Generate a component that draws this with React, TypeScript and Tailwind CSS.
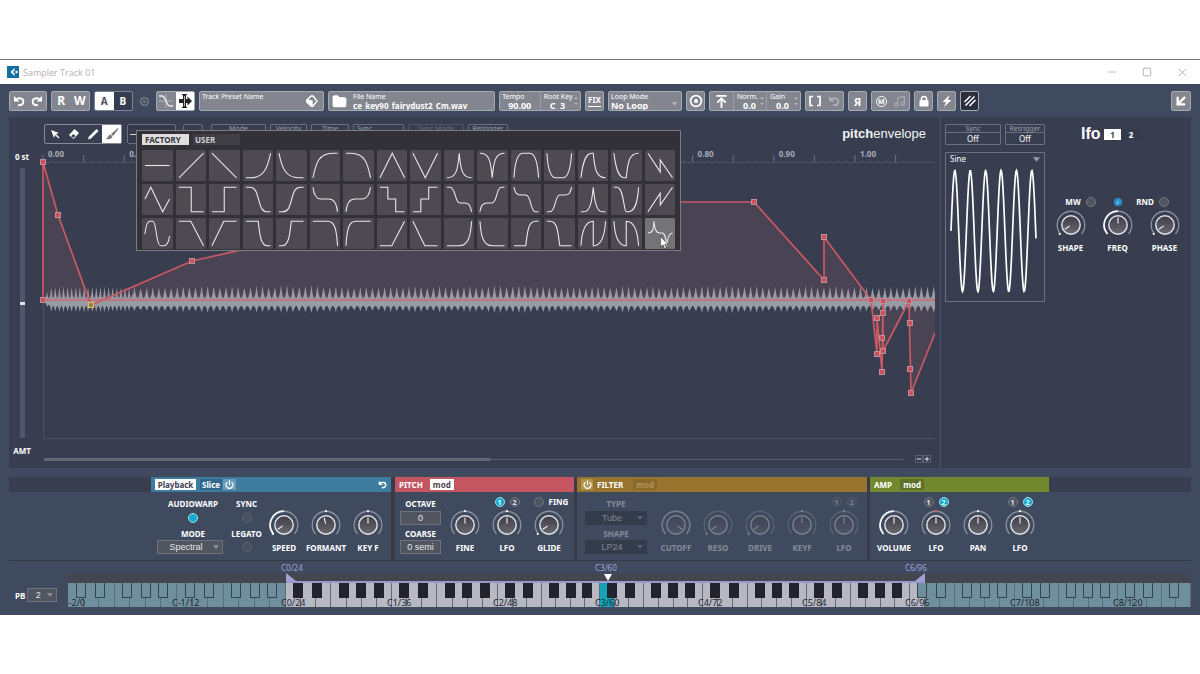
import { ReactNode } from 'react';
import { twMerge } from 'tailwind-merge';
import {
  ArrowDownLeft,
  ArrowUpToLine,
  FolderClosed,
  Minus,
  Music,
  Plus,
  Power,
  Square,
  X,
} from 'lucide-react';

const CURVES = [
  'M0 12.5H25',
  'M0 25L25 0',
  'M0 0L25 25',
  'M0 25H5C18 25 22 15 25 0',
  'M0 0C3 15 7 25 20 25H25',
  'M0 25C3 10 6 0 20 0H25',
  'M0 0H5C19 0 22 10 25 25',
  'M0 25L12.5 0L25 25',
  'M0 0L12.5 25L25 0',
  'M0 25C9 25 11 18 12.5 0C14 18 16 25 25 25',
  'M0 0C9 0 11 7 12.5 25C14 7 16 0 25 0',
  'M0 25C1 8 4 0 9 0H16C21 0 24 8 25 25',
  'M0 0C1 17 4 25 9 25H16C21 25 24 17 25 0',
  'M0 25C2 8 5 0 11 0H12.5C14 17 16 25 25 25',
  'M0 0C2 17 5 25 11 25H12.5C14 8 16 0 25 0',
  'M0 0L12.5 19V7L25 25',
  'M0 12L6 0L18 25L25 12',
  'M0 0H12.5V25H25',
  'M0 25H12.5V0H25',
  'M0 0H4C10 0 11 6 13 13C15 20 16 25 22 25H25',
  'M0 25H4C10 25 11 19 13 12C15 5 16 0 22 0H25',
  'M0 0C1 8 3 12 8 12H16C21 12 24 16 25 25',
  'M0 25C1 16 4 12 9 12H16C21 12 24 8 25 0',
  'M0 0H8V12H16V25H25',
  'M0 25H8V12H16V0H25',
  'M0 0H3C9 0 8 16 13 16H18C23 16 24 20 25 25',
  'M0 25C1 18 3 16 8 16H12C18 16 16 0 22 0H25',
  'M0 0C1 6 3 8 8 8H12C18 8 16 25 22 25H25',
  'M0 25H3C9 25 8 8 13 8H18C23 8 24 5 25 0',
  'M0 25H3C9 25 11 16 12.5 0C14 16 16 25 22 25H25',
  'M0 0H3C10 0 10 25 12.5 25H14C21 25 24 17 25 0',
  'M0 25L12.5 6V18L25 0',
  'M0 13C1 4 3 0 5 0H8C12 0 11 25 16 25H19C22 25 24 22 25 15',
  'M0 0H12L25 25',
  'M0 25L12 0H25',
  'M0 0H12.5C14 14 15 25 22 25H25',
  'M0 25H3C10 25 11 14 12.5 0H25',
  'M0 0H15C22 0 24 8 25 25',
  'M0 25C1 8 3 0 10 0H25',
  'M0 25H12L25 0',
  'M0 0L12 25H25',
  'M0 25H12C22 25 24 15 25 0',
  'M0 0C1 15 3 25 13 25H25',
  'M0 25H12C14 8 15 0 22 0H25',
  'M0 0H3C10 0 11 8 13 25H25',
  'M0 25C1 8 5 0 12.5 0V25C20 25 24 17 25 0',
  'M0 0C1 17 5 25 12.5 25V0C20 0 24 8 25 25',
  'M0 12C5 12 6 8 6 0C7 8 8 12 12 12H15C17 13 18 15 19 25C20 15 22 12 25 12',
];

const ENVELOPE = 'M0 154V16L15 69L48 159L149 115L297 82L500 56H711L781 134V91L828 154L834 208V172L839 226L840 155V205L866 155L868 247L892 187';
const NODES = [
  [0, 16], [0, 154], [15, 69], [149, 115], [711, 56], [781, 134], [781, 91], [828, 154], [834, 172],
  [834, 208], [840, 155], [840, 167], [839, 192], [840, 205], [839, 226], [866, 155], [867, 177], [867, 223], [868, 247],
];

// width weight and label of every octave; the last one stops at G8
const OCTAVES = [
  { label: 'C-2/0', weight: 109 },
  { label: 'C-1/12', weight: 109 },
  { label: 'C0/24', weight: 106 },
  { label: 'C1/36', weight: 106 },
  { label: 'C2/48', weight: 102 },
  { label: 'C3/60', weight: 103 },
  { label: 'C4/72', weight: 104 },
  { label: 'C5/84', weight: 103 },
  { label: 'C6/96', weight: 105 },
  { label: 'C7/108', weight: 103 },
  { label: 'C8/120', weight: 73 },
];
const BLACK_KEYS = [0.82, 2.06, 3.82, 4.98, 6.13];

// one half of the wave form: side is -1 above the zero line and 1 below it
function wavePath(side: number) {
  let d = 'M0 154';
  for (let x = 0; x <= 892; x += 0.5) {
    const period = x < 90 ? 4.1 : 6.1;
    const spike = Math.pow(Math.abs(1 - (2 * (x % period)) / period), 2);
    const size = (side < 0 ? 12 : 6) + Math.sin(x / 61) * Math.sin(x / 23) + Math.sin(x * 2.3);
    const base = side < 0 ? 2 : 6;
    const fade = Math.min(1, (x + 2) / 10);
    d += `L${x} ${(154 + side * fade * (base + spike * size)).toFixed(1)}`;
  }
  return d + 'V154Z';
}

function sinePath() {
  let d = 'M0 61';
  for (let x = 0; x <= 85; x += 0.5) {
    d += `L${x} ${(61 - 60.5 * Math.sin((x / 15.4) * Math.PI * 2)).toFixed(1)}`;
  }
  return d;
}

function Group({ children, className = '' }: { children: ReactNode; className?: string }) {
  return (
    <div className={twMerge('flex h-5 items-center justify-around overflow-hidden rounded-[2px] border border-[#a5a9b1] bg-[#83868f] text-white', className)}>
      {children}
    </div>
  );
}

function IconButton({ label, children, className = '' }: { label: string; children: ReactNode; className?: string }) {
  return (
    <button aria-label={label} className={`flex h-full flex-1 items-center justify-center ${className}`}>
      {children}
    </button>
  );
}

function UndoArrow({ className = '' }: { className?: string }) {
  return (
    <svg viewBox="0 0 12 12" className={`h-3 w-3 ${className}`} fill="none" stroke="currentColor" strokeWidth="1.9">
      <path d="M3 4.500C5 2.500 10.300 2.700 10.300 6.400C10.300 8.600 8.500 10.300 5 10.300" />
      <path d="M1 1V6.500H6.500Z" fill="currentColor" stroke="none" />
    </svg>
  );
}

function Field({ label, value, className = '' }: { label: string; value: string; className?: string }) {
  return (
    <label className={`flex min-w-0 flex-col text-[7px] leading-[8px] ${className}`}>
      {label}
      <input defaultValue={value} className="h-[9px] w-full bg-transparent text-[9px] leading-[9px] font-bold text-inherit outline-none" />
    </label>
  );
}

function Stepper() {
  return (
    <svg viewBox="0 0 4 10" className="h-[10px] w-1 shrink-0 fill-[#b9bcc3]">
      <path d="M0 3L2 1L4 3ZM0 7L2 9L4 7Z" />
    </svg>
  );
}

function Knob({ label, angle = 0, bright, dot, top, wide }: { label: string; angle?: number; bright?: 'half' | 'full'; dot?: string; top?: ReactNode; wide?: boolean }) {
  return (
    <div className={`flex flex-col items-center ${wide ? 'w-[47px]' : 'w-[42px]'}`}>
      <div className="flex h-3 items-center justify-center gap-[5px] whitespace-nowrap">{top}</div>
      <svg viewBox="-15 -15 30 30" role="img" aria-label={label} className="mt-[2px] h-[30px] w-[30px]">
        <defs>
          <linearGradient id="cap" x1="0" y1="0" x2="0" y2="1">
            <stop offset="0" stopColor="#3f3d45" />
            <stop offset="1" stopColor="#6a6870" />
          </linearGradient>
        </defs>
        <path d="M-10.5 9A13.8 13.8 0 1 1 10.5 9" fill="none" stroke="#8b919d" strokeWidth="1.3" />
        {bright === 'half' && <path d="M-10.5 9A13.8 13.8 0 0 1 0 -13.8" fill="none" stroke="#f4f5f7" strokeWidth="1.7" />}
        {bright === 'full' && <path d="M-10.5 9A13.8 13.8 0 1 1 10.5 9" fill="none" stroke="#d5d8de" strokeWidth="1.5" />}
        <circle r="9.2" fill="url(#cap)" stroke="#e4e5e9" strokeWidth="1.4" />
        <path d="M0 -7.5V-1.5" stroke="#f4f5f7" strokeWidth="1.1" transform={`rotate(${angle})`} />
        {dot && <circle cy="-13.8" r="1.1" fill={dot} />}
        {angle < -90 && <circle cx="-11.3" cy="9" r="1.1" fill="#fff" />}
      </svg>
      <span className="mt-[3px] text-[8px] leading-[10px] font-bold">{label}</span>
    </div>
  );
}

function Lamp({ on, label, text }: { on?: boolean; label: string; text?: string }) {
  return (
    <button
      aria-label={label}
      className={`flex h-[10px] w-[10px] shrink-0 items-center justify-center rounded-full border text-[7px] leading-none font-bold ${
        on ? 'border-[#a9e0ee] bg-[#12a9cc] text-white' : 'border-[#73777f] bg-[#50545f] text-gray-200'
      }`}
    >
      {text}
    </button>
  );
}

function LfoLamps({ on }: { on?: number }) {
  return (
    <>
      <Lamp label="LFO 1" text="1" on={on === 1} />
      <Lamp label="LFO 2" text="2" on={on === 2} />
    </>
  );
}

function Picker({ label, value, className = '' }: { label: string; value: string; className?: string }) {
  return (
    <div className={`relative ${className}`}>
      <select aria-label={label} className="block h-[14px] w-full appearance-none border border-[#6c717d] bg-[#505560] pr-2 font-['Liberation_Sans',sans-serif] text-[9px] leading-[12px] font-normal text-gray-200 [text-align-last:center]">
        <option>{value}</option>
      </select>
      <svg viewBox="0 0 6 4" className="pointer-events-none absolute top-[5px] right-1 h-1 w-[6px] fill-[#8b8f99]">
        <path d="M0 0H6L3 4Z" />
      </svg>
    </div>
  );
}

function Param({ label, value, className = '' }: { label: string; value?: string; className?: string }) {
  return (
    <div className={`flex h-[21px] shrink-0 flex-col rounded-[1px] border border-[#6a7080] text-center text-[8px] ${className}`}>
      <span className="h-2 border-b border-[#6a7080] text-[7px] leading-[8px] text-[#9a9fac]">{label}</span>
      <button aria-label={label} className="flex-1 leading-[11px] text-white">{value}</button>
    </div>
  );
}

function Toolbar() {
  return (
    <div className="flex items-center gap-1 px-[9px] pt-[7px] pb-[6px]">
      <Group className="w-[38px]">
        <IconButton label="Undo"><UndoArrow /></IconButton>
        <IconButton label="Redo"><UndoArrow className="-scale-x-100" /></IconButton>
      </Group>
      <Group className="w-[39px] text-[12px] leading-none font-bold">
        <IconButton label="Read">R</IconButton>
        <IconButton label="Write">W</IconButton>
      </Group>
      <Group className="w-[39px] border-[#7d8493] bg-[#353c50] text-[10px] font-bold">
        <IconButton label="Setting A" className="bg-white text-[#4b4f5b]">A</IconButton>
        <IconButton label="Setting B">B</IconButton>
      </Group>
      <div className="flex w-[15px] justify-center">
        <span className="flex h-[9px] w-[9px] items-center justify-center rounded-full border border-[#8d94a2] bg-[#4a4f5c]">
          <span className="h-[3px] w-[3px] rounded-full bg-[#6d7380]" />
        </span>
      </div>
      <Group className="w-[39px]">
        <IconButton label="Crossfade">
          <svg viewBox="0 0 18 18" className="h-[18px] w-[18px]" fill="none">
            <path d="M2 9H16M9 2V16" stroke="#b3b6bd" />
            <path d="M2 4H5C9 4 9 14 13 14H16" stroke="#f0f0f0" strokeWidth="1.3" />
          </svg>
        </IconButton>
        <IconButton label="Snap" className="bg-white">
          <svg viewBox="0 0 18 18" className="h-[18px] w-[18px] fill-[#222]">
            <path d="M3 7H7V3.500L5.500 2H11.500L10 3.500V7H11.500V4.500L16 9L11.500 13.500V11H10V14.500L11.500 16H5.500L7 14.500V11H3Z" />
            <path d="M8.500 4V14" stroke="#fff" strokeWidth=".7" />
          </svg>
        </IconButton>
      </Group>
      <Group className="w-[125px] justify-between pr-1 pl-[2px]">
        <span className="self-start text-[7px] leading-[9px]">Track Preset Name</span>
        <button aria-label="Load preset">
          <svg viewBox="0 0 14 14" className="h-[14px] w-[14px]" fill="none" stroke="#fff" strokeWidth="1.4">
            <path d="M2 6L6 2H8L12 7L8 12H6L2 8Z" />
            <path d="M2 6L7 7V12L2 8Z" fill="#fff" />
          </svg>
        </button>
      </Group>
      <Group className="w-[167px] pl-[3px]">
        <button aria-label="Open file"><FolderClosed size={15} strokeWidth={2} fill="white" /></button>
        <Field label="File Name" value="ce_key90_fairydust2_Cm.wav" className="ml-[6px] flex-1 [&>input]:text-[8px]" />
      </Group>
      <Group className="w-[82px] px-[2px]">
        <Field label="Tempo" value="90.00" className="w-[38px] [&>input]:pl-[6px]" />
        <span className="h-full w-px bg-[#9b9ea6]" />
        <Field label="Root Key" value="C  3" className="w-8 pl-[2px] whitespace-nowrap [&>input]:pl-[6px]" />
        <Stepper />
      </Group>
      <Group className="w-[19px]">
        <IconButton label="Fix" className="text-[8px] leading-none font-bold"><span className="border-b border-white pb-[2px]">FIX</span></IconButton>
      </Group>
      <Group className="w-[74px] pr-1 pl-[2px]">
        <label className="flex flex-1 flex-col text-[7px] leading-[8px]">
          Loop Mode
          <select className="h-[9px] appearance-none bg-transparent text-[9px] leading-[9px] font-bold"><option>No Loop</option></select>
        </label>
        <svg viewBox="0 0 6 4" className="mt-[6px] h-1 w-[5px] fill-[#b9bcc3]"><path d="M0 0H6L3 4Z" /></svg>
      </Group>
      <Group className="w-[19px]">
        <IconButton label="Monitor">
          <svg viewBox="0 0 14 14" className="h-[14px] w-[14px]" fill="none" stroke="#fff" strokeWidth="1.7">
            <circle cx="7" cy="7" r="5.4" />
            <circle cx="7" cy="7" r="2" fill="#fff" stroke="none" />
          </svg>
        </IconButton>
      </Group>
      <Group className="w-[92px] pr-[2px]">
        <IconButton label="Normalize" className="border-r border-[#9b9ea6]"><ArrowUpToLine size={15} strokeWidth={3} /></IconButton>
        <Field label="Norm." value="0.0" className="w-[26px] pl-[3px] [&>input]:pl-[6px]" />
        <Stepper />
        <span className="ml-[2px] h-full w-px bg-[#9b9ea6]" />
        <Field label="Gain" value="0.0" className="w-[27px] pl-[3px] [&>input]:pl-[6px]" />
        <Stepper />
      </Group>
      <Group className="w-[39px]">
        <IconButton label="Trim">
          <svg viewBox="0 0 14 12" className="h-3 w-[14px]" fill="none" stroke="#fff" strokeWidth="1.7"><path d="M5 1.5H2V10.5H5M9 1.5H12V10.5H9" /></svg>
        </IconButton>
        <IconButton label="Revert" className="text-[#acafb6]"><UndoArrow /></IconButton>
      </Group>
      <Group className="w-[19px]">
        <IconButton label="Reverse" className="text-[11px] leading-none font-bold">Я</IconButton>
      </Group>
      <Group className="w-[39px]">
        <IconButton label="Mono">
          <span className="flex h-[11px] w-[11px] items-center justify-center rounded-full border border-white text-[7px] leading-none font-bold">M</span>
        </IconButton>
        <IconButton label="Legato" className="text-[#acafb6]"><Music size={13} strokeWidth={2} /></IconButton>
      </Group>
      <Group className="w-[19px]">
        <IconButton label="Lock">
          <svg viewBox="0 0 12 12" className="h-3 w-3">
            <rect x="1.500" y="5" width="9" height="6.500" rx="1" fill="#fff" />
            <path d="M3.500 5.500V4A2.500 2.500 0 0 1 8.500 4V5.500" fill="none" stroke="#fff" strokeWidth="1.500" />
          </svg>
        </IconButton>
      </Group>
      <Group className="w-[19px]">
        <IconButton label="Flash">
          <svg viewBox="0 0 12 12" className="h-3 w-3 fill-white"><path d="M8.500 0L1.500 7H5L3 12L10.500 5H7Z" /></svg>
        </IconButton>
      </Group>
      <Group className="w-[19px] bg-[#2b2e3c]">
        <IconButton label="MIDI">
          <svg viewBox="0 0 14 14" className="h-[14px] w-[14px]" stroke="#fff" strokeWidth="1.500"><path d="M1.500 8L7.500 2M2.500 11.500L11.500 2.500M6.500 12L12.500 6" /></svg>
        </IconButton>
      </Group>
      <Group className="ml-auto w-5">
        <IconButton label="Collapse"><ArrowDownLeft size={16} strokeWidth={3.500} /></IconButton>
      </Group>
    </div>
  );
}

function CurvePopup() {
  return (
    <div className="absolute top-[13px] left-[127px] w-[545px] border border-[#7d7c83] bg-[#333138] px-[5px] pt-[3px] pb-px">
      <div className="flex gap-1 text-[8px] leading-[11px] font-bold">
        <button className="w-[47px] bg-[#dedede] pl-[3px] text-left text-[#37353b]">FACTORY</button>
        <button className="w-[47px] bg-[#413f46] pl-[2px] text-left text-[#d0d0d3]">USER</button>
      </div>
      <div className="mt-[5px] grid grid-cols-[repeat(16,1fr)] gap-[3px]">
        {CURVES.map((d, i) => (
          <button key={i} aria-label={`Curve ${i + 1}`} className={`relative h-[31px] rounded-[1px] ${i === 47 ? 'bg-[#747376]' : 'bg-[#4d4a51]'}`}>
            <svg viewBox="-3 -3 31 31" className="h-[31px] w-full" fill="none" stroke="#e9e9ea" strokeWidth="1.1">
              <path d={d} />
            </svg>
            {i === 47 && (
              <svg viewBox="0 0 10 15" className="absolute top-[18px] left-[15px] h-[14px] w-[9px]">
                <path d="M.5 .5V12L3.300 9.500L5.200 14L7.200 13.200L5.300 8.900H9Z" fill="#fff" stroke="#222" strokeWidth=".6" />
              </svg>
            )}
          </button>
        ))}
      </div>
    </div>
  );
}

function EnvelopeGraph() {
  return (
    <svg className="block h-[294px] w-full">
      <g transform="translate(6 0)">
        <path d="M0.5 16V292.500H2000M0 16.5H2000" fill="none" stroke="#4b5264" />
        {Array.from({ length: 110 }, (_, i) => (
          <path key={i} d={`M${i * 8.12} 16V${i % 5 ? 14 : 9}`} stroke={i % 5 ? '#4b5264' : '#6b7282'} />
        ))}
        {Array.from({ length: 11 }, (_, i) => (
          <text key={i} x={5 + i * 81.2} y={11} className="fill-[#a7acb7] text-[8px] font-bold">{(i / 10).toFixed(2)}</text>
        ))}
        <path d={`${ENVELOPE}V154Z`} fill="#4a4353" />
        <path d={wavePath(-1)} fill="#9b98a1" />
        <path d={wavePath(1)} fill="#979ca4" />
        <path d="M0 154H892" stroke="#c8707c" strokeWidth="2" opacity=".85" />
        <path d={ENVELOPE} fill="none" stroke="#cb5864" strokeWidth="1.700" />
        {NODES.map(([x, y], i) => (
          <rect key={i} x={x - 2.500} y={y - 2.500} width="5" height="5" fill="#d04f5c" stroke="#bd8f97" />
        ))}
        <rect x="45.500" y="156.500" width="5" height="5" fill="#8b7e68" stroke="#f2c04e" />
      </g>
    </svg>
  );
}

function Tools() {
  return (
    <div className="flex h-[29px] items-start pt-[7px] pl-[35px]">
      <div className="flex h-5 w-[78px] shrink-0 rounded-[2px] border border-[#858b99] text-white">
        <IconButton label="Select">
          <svg viewBox="0 0 10 10" className="h-[10px] w-[10px] fill-white"><path d="M1 1L9 4L6 5L9.500 8.500L8.500 9.500L5 6L4 9Z" /></svg>
        </IconButton>
        <IconButton label="Erase">
          <svg viewBox="0 0 12 12" className="h-3 w-3"><path d="M6.500 1L11 5L5.500 11L1 7Z" fill="#fff" /><path d="M3.200 8.200L5.400 10L7.400 7.800L5.200 6Z" fill="#383f52" /></svg>
        </IconButton>
        <IconButton label="Draw">
          <svg viewBox="0 0 12 12" className="h-3 w-3 fill-white"><path d="M9.500 1L11.500 3L4 10.500L1 11.500L2 8.500Z" /></svg>
        </IconButton>
        <IconButton label="Paint curve" className="bg-white">
          <svg viewBox="0 0 14 14" className="h-[14px] w-[14px] fill-[#7a7a80]"><path d="M13 1L13.500 2L8 9L6 7ZM5.500 7.500L7.500 9.500C6.500 12.500 3.500 12.500 .5 12C3 11.500 2.500 8.500 5.500 7.500Z" /></svg>
        </IconButton>
      </div>
      <div className="ml-[5px] flex h-5 w-[49px] shrink-0 items-center rounded-[2px] border border-[#6a7080] bg-[#343a4c] px-[2px] pt-[1px]">
        <span className="h-px w-7 bg-gray-300" />
      </div>
      <div className="ml-[7px] h-5 w-5 shrink-0 rounded-[2px] border border-[#6a7080] pt-[5px]"><div className="mx-auto h-px w-3 bg-gray-200" /></div>
      <div className="ml-2 flex gap-1">
        <Param label="Mode" className="w-[55px]" />
        <Param label="Velocity" className="w-[37px]" />
        <Param label="Time" className="w-[38px]" />
        <Param label="Sync" className="w-[51px] [&>span]:pr-7" />
        <Param label="Sync Mode" className="w-14 opacity-50" />
        <Param label="Retrigger" className="w-10" />
      </div>
      <h2 className="ml-auto pr-[14px] font-['Liberation_Sans',sans-serif] text-[13px] leading-5 text-gray-100">
        <b>pitch</b>envelope
      </h2>
    </div>
  );
}

function LfoPanel() {
  return (
    <aside className="flex w-[250px] shrink-0 gap-3 bg-[#383e50] pt-[7px] pl-1">
      <div className="w-[100px]">
        <div className="flex justify-between">
          <Param label="Sync" value="Off" className="w-14" />
          <Param label="Retrigger" value="Off" className="w-10" />
        </div>
        <div className="relative mt-[7px] border border-[#6a7080] pb-[7px] pl-1">
          <select aria-label="LFO shape" className="block h-3 w-full appearance-none bg-transparent text-[8px] leading-none text-white"><option>Sine</option></select>
          <svg viewBox="0 0 8 5" className="pointer-events-none absolute top-1 right-1 h-[5px] w-[7px] fill-[#9a9fac]"><path d="M0 0H8L4 5Z" /></svg>
          <svg viewBox="-1 -2 88 126" className="mt-[3px] h-[126px] w-[88px]" fill="none" stroke="#fff" strokeWidth="1.700">
            <path d={sinePath()} />
          </svg>
        </div>
      </div>
      <div className="flex-1">
        <div className="ml-6 flex h-5 items-center text-[8px] font-bold text-white">
          <h2 className="w-[23px] font-['Liberation_Sans',sans-serif] text-[16px] leading-5">lfo</h2>
          <button className="h-[11px] w-[17px] bg-white leading-[11px] text-[#383e50]">1</button>
          <button className="h-[11px] w-5 bg-[#343a4b] leading-[11px]">2</button>
        </div>
        <div className="mt-[52px] -ml-[10px] flex text-white">
          <Knob wide label="SHAPE" angle={-125} top={<><b className="pl-5 text-[8px]">MW</b><Lamp label="Mod wheel" /></>} />
          <Knob wide label="FREQ" bright="half" top={<span className="flex h-2 w-2 items-center justify-center rounded-full bg-[#2592cc] text-[6px] leading-none">♪</span>} />
          <Knob wide label="PHASE" angle={-125} top={<><b className="-ml-6 text-[8px]">RND</b><Lamp label="Random" /></>} />
        </div>
      </div>
    </aside>
  );
}

function Sections() {
  const caption = 'text-center text-[8px] leading-[10px] font-bold';
  const box = "block h-[14px] w-full border border-[#6c717d] bg-[#505560] text-center font-['Liberation_Sans',sans-serif] text-[9px] font-normal text-gray-200";
  const header = 'flex h-[15px] items-center px-1 text-[8px] leading-[11px] font-bold';
  return (
    <div className="mx-[9px] mt-[9px] flex border-b border-[#343845] text-white">
      <div className="h-[15px] w-[142px] bg-[#383d4f]" />
      <section className="w-[240px]">
        <header className={`${header} bg-[#3d7b9f]`}>
          <button className="w-[41px] bg-white text-[#39404f]">Playback</button>
          <button className="ml-1 bg-[#31688a] px-[2px]">Slice</button>
          <button aria-label="Slice power" className="ml-px flex h-[11px] w-[13px] items-center justify-center bg-[#6b9dbb]"><Power size={9} strokeWidth={3} /></button>
          <button aria-label="Reset" className="ml-auto"><UndoArrow className="h-[9px] w-[9px]" /></button>
        </header>
        <div className="flex h-[68px] pt-1 pl-[6px]">
          <div className="flex w-[66px] flex-col items-center pt-[3px] pl-[6px]">
            <span className={caption}>AUDIOWARP</span>
            <div className="mt-1"><Lamp on label="AudioWarp" /></div>
            <span className={`mt-[6px] ${caption}`}>MODE</span>
            <Picker label="Mode" value="Spectral" className="mt-px -ml-[6px] w-[66px]" />
          </div>
          <div className="ml-[7px] flex w-[33px] flex-col items-center pt-[3px]">
            <span className={caption}>SYNC</span>
            <div className="mt-1 opacity-60"><Lamp label="Sync" /></div>
            <span className={`mt-[6px] ${caption}`}>LEGATO</span>
            <div className="mt-[3px] opacity-60"><Lamp label="Legato" /></div>
          </div>
          <Knob label="SPEED" angle={-125} bright="half" />
          <Knob label="FORMANT" angle={-15} dot="#fff" />
          <Knob label="KEY F" dot="#fff" />
        </div>
      </section>
      <section className="w-[183px] border-l-4 border-[#393c48]">
        <header className={`${header} bg-[#c35660]`}>
          PITCH
          <button className="ml-[7px] w-6 bg-white text-[#4d4650]">mod</button>
        </header>
        <div className="flex h-[68px] pt-1 pl-[5px]">
          <div className="mr-[3px] w-[41px] pt-[3px]">
            <label className={`block ${caption}`}>OCTAVE<input defaultValue="0" className={`mt-[2px] ${box}`} /></label>
            <label className={`mt-1 block ${caption}`}>COARSE<input defaultValue="0 semi" className={`mt-px ${box}`} /></label>
          </div>
          <Knob label="FINE" dot="#fff" />
          <Knob label="LFO" dot="#fff" top={<LfoLamps on={1} />} />
          <Knob label="GLIDE" angle={-125} top={<div className="ml-1 flex items-center gap-[5px]"><Lamp label="Fingered" /><b className="text-[8px]">FING</b></div>} />
        </div>
      </section>
      <section className="w-[293px] border-l-[3px] border-[#393c48]">
        <header className={`${header} bg-[#98742f]`}>
          <button aria-label="Filter power" className="flex h-[11px] w-3 items-center justify-center bg-[#b39350]"><Power size={9} strokeWidth={3} /></button>
          <span className="ml-1">FILTER</span>
          <button className="ml-[10px] w-6 bg-[#8b692a] text-[#b0935c]">mod</button>
        </header>
        <div className="flex h-[68px] pt-1 pl-2 opacity-35">
          <div className="mr-2 flex w-[62px] flex-col items-center pt-[3px]">
            <span className={caption}>TYPE</span>
            <Picker label="Type" value="Tube" className="mt-[2px] w-full [&>select]:border-[#22242b] [&>select]:bg-[#22242b]" />
            <span className={`mt-1 ${caption}`}>SHAPE</span>
            <Picker label="Shape" value="LP24" className="mt-px w-full [&>select]:border-[#22242b] [&>select]:bg-[#22242b]" />
          </div>
          <Knob label="CUTOFF" angle={125} bright="full" />
          <Knob label="RESO" angle={-125} />
          <Knob label="DRIVE" angle={-125} />
          <Knob label="KEYF" dot="#fff" />
          <Knob label="LFO" dot="#fff" top={<LfoLamps />} />
        </div>
      </section>
      <section className="w-[182px] border-l-[3px] border-[#393c48]">
        <header className={`${header} bg-[#73872f]`}>
          AMP
          <button className="ml-2 w-6 bg-[#5f7128]">mod</button>
        </header>
        <div className="flex h-[68px] pt-1 pl-[3px]">
          <Knob label="VOLUME" bright="half" />
          <Knob label="LFO" dot="#e0545f" top={<LfoLamps on={2} />} />
          <Knob label="PAN" dot="#fff" />
          <Knob label="LFO" dot="#fff" top={<LfoLamps on={2} />} />
        </div>
      </section>
      <div className="h-[15px] flex-1 bg-[#383d4f]" />
    </div>
  );
}

function Octave({ index }: { index: number }) {
  const { label, weight } = OCTAVES[index];
  const whites = index === 10 ? 5 : 7;
  const octaveOn = index >= 2 && index < 8;
  return (
    <div className="relative flex" style={{ flex: `${weight} 1 0` }}>
      {Array.from({ length: whites }, (_, i) => (
        <button
          key={i}
          aria-label={`Key ${label} ${i}`}
          className={`h-full flex-1 border-r border-[#5d6c7b] ${
            index === 5 && i === 0 ? 'bg-[#12a3bb]' : octaveOn || (index === 8 && i === 0) ? 'bg-[#b8b8c3]' : 'bg-[#6e8f9e]'
          }`}
        />
      ))}
      {BLACK_KEYS.filter((k) => k < whites - 0.5).map((k) => (
        <span
          key={k}
          className={`absolute top-0 h-[15px] w-[10px] -translate-x-1/2 border border-t-0 ${
            octaveOn ? 'border-[#22232d] bg-[#22232d]' : 'border-[#34444f] bg-[#6e8f9e]'
          }`}
          style={{ left: `${(k / whites) * 100}%` }}
        />
      ))}
    </div>
  );
}

function Keyboard() {
  let total = 0;
  const starts = OCTAVES.map((o) => {
    total += o.weight;
    return total - o.weight;
  });
  const at = (i: number) => `${(starts[i] / total) * 100}%`;
  return (
    <div className="mx-[9px] flex pt-px pb-2 text-white">
      <div className="flex w-[59px] gap-[2px] pt-[26px] pl-[6px] text-[8px] leading-[16px] font-bold">
        PB
        <Picker label="Pitch bend" value="2" className="w-[30px]" />
      </div>
      <div className="min-w-0 flex-1">
        <div className="relative h-3 text-[8px] leading-[12px] text-[#a3a1dc]">
          {[2, 5, 8].map((i) => (
            <span key={i} className="absolute -ml-[5px]" style={{ left: at(i) }}>{OCTAVES[i].label}</span>
          ))}
        </div>
        <div className="relative h-[9px] bg-[#43464f]">
          <div className="absolute inset-y-0 border-b-2 border-[#9b98cf]" style={{ left: at(2), right: `${100 - ((starts[8] + 15) / total) * 100}%` }}>
            <svg viewBox="0 0 10 8" className="absolute bottom-0 left-0 h-2 w-[10px] fill-[#a3a1d0]"><path d="M0 0L10 8H0Z" /></svg>
            <svg viewBox="0 0 10 8" className="absolute right-0 bottom-0 h-2 w-[10px] fill-[#a3a1d0]"><path d="M10 0L0 8H10Z" /></svg>
          </div>
          <svg viewBox="0 0 8 7" className="absolute top-0 ml-1 h-[7px] w-2 fill-white" style={{ left: at(5) }}><path d="M0 0H8L4 7Z" /></svg>
        </div>
        <div className="relative flex h-6 overflow-x-clip">
          {OCTAVES.map((o, i) => <Octave key={o.label} index={i} />)}
          {OCTAVES.map((o, i) => (
            <span key={o.label} className="pointer-events-none absolute -bottom-[2px] -ml-[5px] text-[9px] leading-[13px] text-[#23252d]" style={{ left: at(i) }}>{o.label}</span>
          ))}
        </div>
      </div>
    </div>
  );
}

export default function App() {
  return (
    <div className="min-h-screen bg-white pt-[59px] font-['Noto_Sans',sans-serif]">
      <main className="border-t border-[#77747a] bg-[#3f4a5f]">
        <div className="flex h-6 items-center bg-white px-[7px] text-[#b9aeb3]">
          <svg viewBox="0 0 12 12" className="h-3 w-3">
            <rect width="12" height="12" fill="#13719f" />
            <path d="M7.500 2L3.500 6L7.500 10V7.500L6 6L7.500 4.500ZM8.500 4.800H10.500V7.200H8.500Z" fill="#fff" />
          </svg>
          <h1 className="ml-1 font-['Open_Sans',sans-serif] text-[9px] leading-none">Sampler Track 01</h1>
          <div className="ml-auto flex items-center gap-6 pr-1 text-[#a7a5a8]">
            <button aria-label="Minimize"><Minus size={12} strokeWidth={1.500} /></button>
            <button aria-label="Maximize"><Square size={10} strokeWidth={2} /></button>
            <button aria-label="Close"><X size={13} strokeWidth={1.500} /></button>
          </div>
        </div>

        <Toolbar />

        <div className="mx-[9px] flex">
          <div className="relative min-w-0 flex-1 border-r border-[#4b5468] bg-[#383e50]">
            <Tools />
            <div className="flex pr-[5px]">
              <div className="mr-[2px] flex w-[26px] shrink-0 flex-col items-center text-[8px] leading-[10px] font-bold text-white">
                <span className="mt-[6px]">0 st</span>
                <input
                  type="range"
                  aria-label="Amount"
                  defaultValue={50}
                  className="mt-[6px] h-[270px] w-[5px] appearance-none bg-[#4d576a] [writing-mode:vertical-lr] [&::-webkit-slider-thumb]:h-[3px] [&::-webkit-slider-thumb]:w-[5px] [&::-webkit-slider-thumb]:appearance-none [&::-webkit-slider-thumb]:bg-gray-200"
                />
                <span className="mt-2">AMT</span>
              </div>
              <div className="min-w-0 flex-1">
                <EnvelopeGraph />
                <div className="flex h-7 items-center pt-[10px] pl-[7px]">
                  <div className="h-[3px] w-1/2 bg-[#646873]" />
                  <div className="h-px flex-1 bg-[#5a6070]" />
                  <div className="mr-1 ml-3 flex text-gray-200">
                    <button aria-label="Zoom out" className="border border-[#5a6070]"><Minus size={6} strokeWidth={4} /></button>
                    <button aria-label="Zoom in" className="border border-[#5a6070]"><Plus size={6} strokeWidth={4} /></button>
                  </div>
                </div>
              </div>
            </div>
            <CurvePopup />
          </div>
          <LfoPanel />
        </div>

        <Sections />
        <Keyboard />
      </main>
    </div>
  );
}
